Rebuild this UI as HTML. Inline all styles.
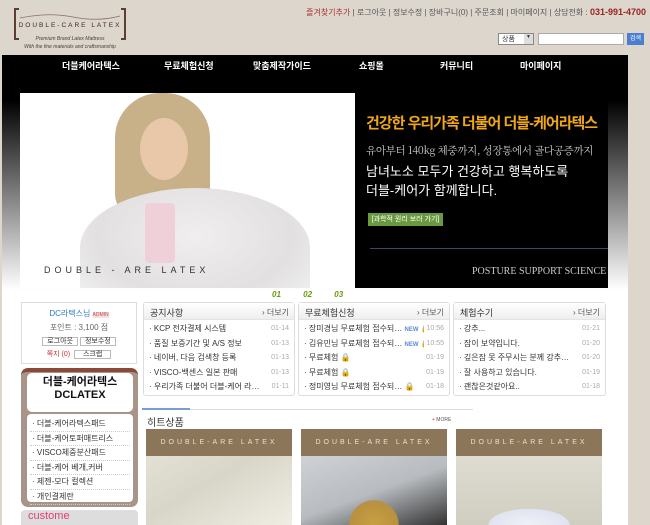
<!DOCTYPE html>
<html><head><meta charset="utf-8"><style>
*{margin:0;padding:0;box-sizing:border-box}
body{width:650px;height:525px;overflow:hidden;background:#dcd6cc;font-family:"Liberation Sans","Noto Sans CJK KR",sans-serif;position:relative;font-size:9px;color:#333}
.a{position:absolute}
.box{position:absolute;border:1px solid #ddd;border-radius:3px;background:#fff}
.box .h{height:17px;background:linear-gradient(#fff,#eee);border-bottom:1px solid #e4e4e4;padding:3px 6px;font-size:9px;color:#333;position:relative}
.box .h span{position:absolute;right:5px;top:4px;font-size:8px;color:#555}
.box ul{list-style:none;padding:2px 5px}
.box li{height:14.6px;line-height:14.6px;font-size:8px;position:relative;white-space:nowrap;overflow:hidden}
.box li i{position:absolute;right:0;font-style:normal;color:#aaa;font-size:7px;background:#fff;padding-left:2px}
.cat li{font-size:8px;border-bottom:1px dotted #ccc;height:14.6px;line-height:14px;list-style:none;padding-left:2px}
.prod{position:absolute;top:429px;width:146px;height:96px}
.prod .t{height:27px;background:#8c7659;color:#e8e0d0;font-size:7px;letter-spacing:3px;text-align:center;line-height:27px;white-space:nowrap}
</style></head><body>
<div class="a" style="left:14px;top:8px;width:112px;height:32px;border:2px solid #5a4030;border-top:none;border-bottom:none;"></div>
<div class="a" style="left:14px;top:8px;width:5px;height:2px;background:#5a4030"></div>
<div class="a" style="left:121px;top:8px;width:5px;height:2px;background:#5a4030"></div>
<div class="a" style="left:14px;top:38px;width:5px;height:2px;background:#5a4030"></div>
<div class="a" style="left:121px;top:38px;width:5px;height:2px;background:#5a4030"></div>
<svg class="a" style="left:18px;top:10px" width="104" height="12"><path d="M2 8 Q30 2 55 7 T102 6" stroke="#8a7060" fill="none" stroke-width="0.8"/></svg>
<div class="a" style="left:16px;top:22px;width:108px;text-align:center;font-size:6.5px;letter-spacing:2px;color:#3a2a20;white-space:nowrap">DOUBLE-CARE LATEX</div>
<div class="a" style="left:16px;top:36px;width:108px;text-align:center;font-size:5px;font-style:italic;color:#443;white-space:nowrap">Premium Brand Latex Mattress</div>
<div class="a" style="left:16px;top:44px;width:108px;text-align:center;font-size:5px;font-style:italic;color:#443;white-space:nowrap">With the fine materials and craftsmanship</div>
<div class="a" style="right:4px;top:7px;font-size:8px;color:#555;white-space:nowrap"><span style="color:#a33">즐겨찾기추가</span> | 로그아웃 | 정보수정 | 장바구니(0) | 주문조회 | 마이페이지 | 상담전화 : <b style="color:#922;font-size:9px">031-991-4700</b></div>
<div class="a" style="left:498px;top:33px;width:36px;height:12px;background:#fff;border:1px solid #888;font-size:7px;padding-left:3px">상품 <span style="float:right;width:9px;height:10px;background:#ddd;font-size:5px;text-align:center">▼</span></div>
<div class="a" style="left:538px;top:33px;width:86px;height:12px;background:#fff;border:1px solid #aaa"></div>
<div class="a" style="left:627px;top:33px;width:17px;height:12px;background:#4a7fd0;color:#fff;font-size:6px;text-align:center;line-height:12px">검색</div>
<div class="a" style="left:2px;top:55px;width:626px;height:470px;background:linear-gradient(#000 0,#000 45px,#fff 235px)"></div>
<div class="a" style="left:2px;top:290px;width:626px;height:235px;background:#fff"></div>
<div class="a" style="left:2px;top:59px;width:626px;font-size:9px;color:#fff;font-weight:bold">
<span class="a" style="left:60px">더블케어라텍스</span><span class="a" style="left:162px">무료체험신청</span><span class="a" style="left:251px">맞춤제작가이드</span><span class="a" style="left:357px">쇼핑몰</span><span class="a" style="left:438px">커뮤니티</span><span class="a" style="left:518px">마이페이지</span></div>
<div class="a" style="left:20px;top:93px;width:335px;height:195px;background:#fff;overflow:hidden">
<div class="a" style="left:95px;top:0;width:95px;height:130px;border-radius:45px 45px 30px 30px;background:#c8b088"></div>
<div class="a" style="left:120px;top:25px;width:48px;height:62px;border-radius:50%;background:#e8c8a8"></div>
<div class="a" style="left:60px;top:95px;width:230px;height:120px;border-radius:50% 50% 0 0;background:radial-gradient(ellipse at 50% 40%,#f0eeee,#e2e0e0 60%,#f4f4f4)"></div>
<div class="a" style="left:125px;top:110px;width:30px;height:60px;background:#f0d0d8;border-radius:4px"></div>
</div>
<div class="a" style="left:44px;top:265px;font-size:9px;letter-spacing:4px;color:#333;white-space:nowrap">DOUBLE - ARE LATEX</div>
<div class="a" style="left:355px;top:93px;width:253px;height:195px;background:#000"></div>
<div class="a" style="left:366px;top:112px;font-size:15px;color:#f0a818;font-weight:bold;letter-spacing:-1px;white-space:nowrap">건강한 우리가족 더불어 더블-케어라텍스</div>
<div class="a" style="left:366px;top:143px;font-size:10.5px;color:#ccc;font-family:'Noto Serif CJK SC',serif;white-space:nowrap;letter-spacing:-0.3px">유아부터 140kg 체중까지, 성장통에서 골다공증까지</div>
<div class="a" style="left:366px;top:162px;font-size:13px;color:#fff;line-height:19px;white-space:nowrap">남녀노소 모두가 건강하고 행복하도록<br>더블-케어가 함께합니다.</div>
<div class="a" style="left:368px;top:213px;width:75px;height:13px;background:#6a9a40;color:#fff;font-size:7px;text-align:center;line-height:13px">[과학적 원리 보러 가기]</div>
<div class="a" style="left:370px;top:248px;width:238px;height:1px;background:#3a4a60"></div>
<div class="a" style="left:472px;top:266px;font-size:10px;color:#ccc;font-family:'Liberation Serif',serif;white-space:nowrap">POSTURE SUPPORT SCIENCE</div>
<div class="a" style="top:290px;left:272px;font-size:8px;color:#6a9a10;font-weight:bold;font-style:italic;word-spacing:20px">01 02 03</div>
<div class="box" style="left:21px;top:302px;width:116px;height:62px;border-radius:0;text-align:center">
<div style="margin-top:5px;font-size:8px;color:#2a7ac0">DC라텍스님 <span style="font-size:5px;color:#c44;background:#f4e0e0">ADMIN</span></div>
<div style="font-size:8px;color:#666;margin-top:3px">포인트 : 3,100 점</div>
<div style="margin-top:3px;font-size:7px"><span style="border:1px solid #bbb;padding:0 4px">로그아웃</span> <span style="border:1px solid #bbb;padding:0 4px">정보수정</span></div>
<div style="margin-top:3px;font-size:7px"><span style="color:#c33">쪽지 (0)</span> &nbsp;<span style="border:1px solid #bbb;padding:0 8px">스크랩</span></div></div>
<div class="a" style="left:21px;top:368px;width:117px;height:139px;background:#a89488;border-radius:7px;border-top:4px solid #8a4a3a"></div>
<div class="a" style="left:27px;top:373px;width:106px;height:39px;background:#fff;border-radius:5px;text-align:center;font-size:11px;font-weight:bold;line-height:13px;padding-top:3px;color:#111">더블-케어라텍스<br>DCLATEX</div>
<div class="a cat" style="left:27px;top:414px;width:106px;height:88px;background:#fff;border-radius:4px;padding:3px 3px">
<li>· 더블-케어라텍스패드</li><li>· 더블-케어토퍼매트리스</li><li>· VISCO체중분산패드</li><li>· 더블-케어 베개,커버</li><li>· 제젠-모다 컬렉션</li><li>· 개인결제란</li></div>
<div class="a" style="left:21px;top:510px;width:117px;height:15px;background:#ddd;border-radius:4px 4px 0 0;color:#e04070;font-size:11px;padding-left:7px">custome</div>
<div class="box" style="left:143px;top:302px;width:152px;height:94px"><div class="h">공지사항<span>› 더보기</span></div><ul>
<li>· KCP 전자결제 시스템<i>01-14</i></li><li>· 품질 보증기간 및 A/S 정보<i>01-13</i></li><li>· 네이버, 다음 검색창 등록<i>01-13</i></li><li>· VISCO-백센스 일본 판매<i>01-13</i></li><li>· 우리가족 더불어 더블-케어 라…<i>01-11</i></li></ul></div>
<div class="box" style="left:298px;top:302px;width:152px;height:94px"><div class="h">무료체험신청<span>› 더보기</span></div><ul>
<li>· 장미경님 무료체험 접수되… <b style="color:#5a8ad0;font-size:6px">NEW</b> 🔒<i>10:56</i></li><li>· 김유민님 무료체험 접수되… <b style="color:#5a8ad0;font-size:6px">NEW</b> 🔒<i>10:55</i></li><li>· 무료체험 🔒<i>01-19</i></li><li>· 무료체험 🔒<i>01-19</i></li><li>· 정미영님 무료체험 접수되… 🔒<i>01-18</i></li></ul></div>
<div class="box" style="left:453px;top:302px;width:153px;height:94px"><div class="h">체험수기<span>› 더보기</span></div><ul>
<li>· 강추...<i>01-21</i></li><li>· 잠이 보약입니다.<i>01-20</i></li><li>· 깊은잠 못 주무시는 분께 강추…<i>01-20</i></li><li>· 잘 사용하고 있습니다.<i>01-19</i></li><li>· 괜찮은것같아요..<i>01-18</i></li></ul></div>
<div class="a" style="left:142px;top:409px;width:331px;height:1px;background:#ddd"></div>
<div class="a" style="left:142px;top:408px;width:48px;height:2px;background:#7a9ad8"></div>
<div class="a" style="left:147px;top:414px;font-size:10px;color:#333">히트상품</div>
<div class="a" style="left:432px;top:417px;font-size:5px;color:#555"><span style="color:#c33">+</span> MORE</div>
<div class="prod" style="left:146px;background:linear-gradient(150deg,#e8e6da,#d8d6c8 50%,#f0eee4)"><div class="t">DOUBLE-ARE LATEX</div></div>
<div class="prod" style="left:301px;background:radial-gradient(circle at 50% 100%,#c8a040 0,#b89040 20%,transparent 21%),linear-gradient(160deg,#d8dce0,#b8bcc0 60%,#333)"><div class="t">DOUBLE-ARE LATEX</div></div>
<div class="prod" style="left:456px;background:radial-gradient(ellipse 50px 20px at 50% 100%,#f0f0f8 0,#e0e4f0 80%,transparent 82%),linear-gradient(#e4e2d8,#d0cec0)"><div class="t">DOUBLE-ARE LATEX</div></div>
</body></html>
